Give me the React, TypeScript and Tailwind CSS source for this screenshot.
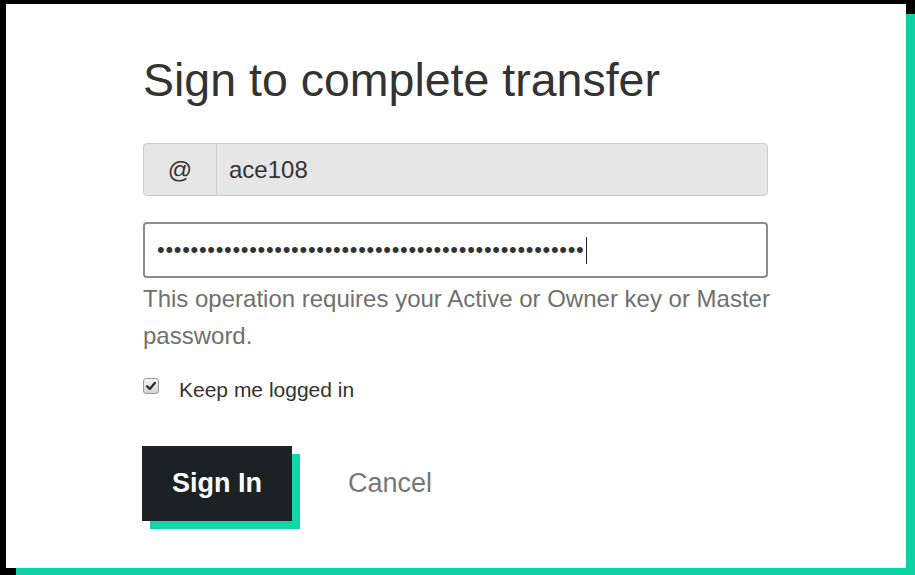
import { FC } from 'react';

const font = { fontFamily: '"Liberation Sans", Arial, sans-serif' };

const Checkbox: FC = () => (
  <div className="mt-[3px] w-[16px] h-[16px] rounded-[3px] border border-[#9a9a9a] bg-gradient-to-b from-[#f4f4f4] to-[#d4d4d4] flex items-center justify-center">
    <svg width="12" height="12" viewBox="0 0 12 12">
      <path d="M2 6.2 L4.8 9 L10 2.8" fill="none" stroke="#2b2b2b" strokeWidth="2.2" strokeLinecap="round" strokeLinejoin="round" />
    </svg>
  </div>
);

export default function App() {
  const dots = '•'.repeat(51);

  return (
    <div className="w-[915px] h-[575px] bg-black pl-[6px] pt-[4px] overflow-hidden" style={font}>
      <div className="w-[900px] h-[564px] bg-white shadow-[10px_10px_0_#0cd2a4] pl-[137px] pt-[48px]">
        <div className="w-[625px] flex flex-col">
          <h1 className="text-[46.5px] leading-[56px] text-[#333333] font-normal whitespace-nowrap">Sign to complete transfer</h1>

          {/* account name */}
          <div className="mt-[35px] h-[53px] flex border border-[#cccccc] rounded-[4px] bg-[#e6e6e6] overflow-hidden">
            <div className="w-[73px] flex items-center justify-center border-r border-[#cccccc] text-[24px] text-[#333333]">
              @
            </div>
            <div className="flex-1 flex items-center pl-[12px] text-[24px] text-[#333333]">ace108</div>
          </div>

          {/* password */}
          <div className="mt-[26px] h-[56px] flex items-center border-2 border-[#8c8c8c] rounded-[4px] bg-white pl-[12px]">
            <span className="text-[22px] text-[#333333] tracking-[0.68px] leading-none">{dots}</span>
            <span className="w-px h-[27px] bg-[#222222] ml-[1px]" />
          </div>

          <p className="mt-[2px] w-[634px] text-[24px] leading-[37px] text-[#707070]">
            This operation requires your Active or Owner key or Master password.
          </p>

          <div className="mt-[21px] flex items-start gap-[20px]">
            <Checkbox />
            <span className="mt-[3px] text-[21px] leading-[24px] text-[#333333]">Keep me logged in</span>
          </div>

          <div className="mt-[44px] flex items-center">
            <button className="-ml-px w-[150px] h-[75px] bg-[#1c2125] text-white text-[27px] font-bold shadow-[8px_8px_0_#10d6a8]">
              Sign In
            </button>
            <button className="ml-[56px] text-[27px] text-[#777777]">Cancel</button>
          </div>
        </div>
      </div>
    </div>
  );
}
